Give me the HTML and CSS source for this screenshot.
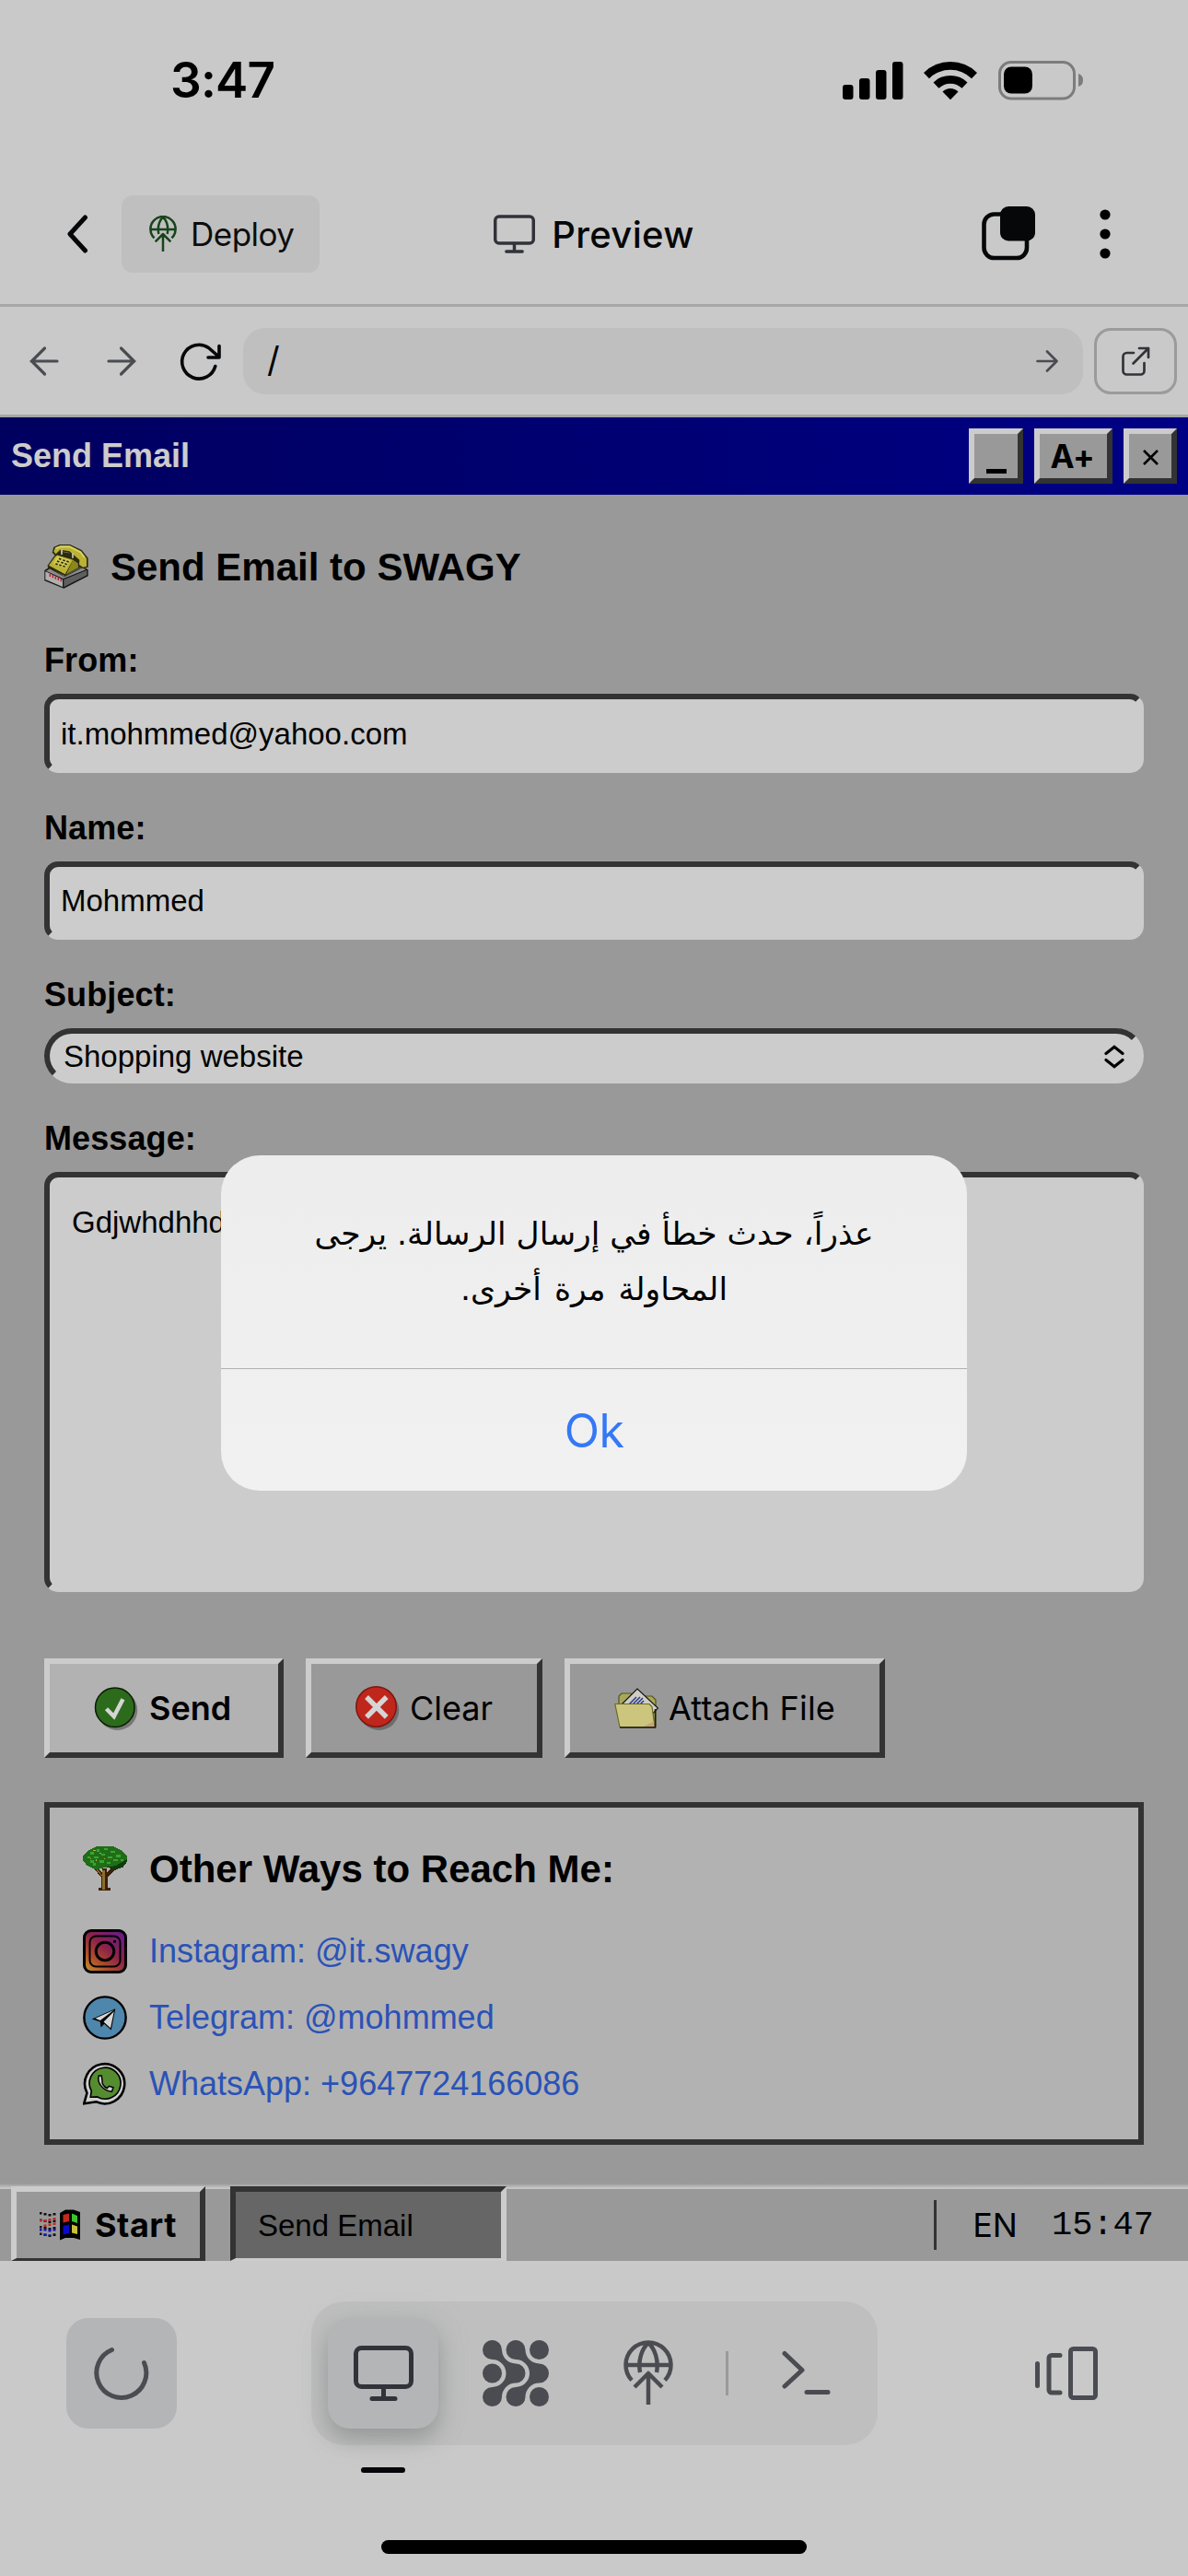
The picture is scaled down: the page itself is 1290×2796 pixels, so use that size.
FILE: index.html
```html
<!DOCTYPE html>
<html lang="en">
<head>
<meta charset="utf-8">
<title>Preview</title>
<link rel="stylesheet" href="styles.css">
</head>
<body>
<div class="screen">
  <div class="status">
    <span class="clock">3:47</span>
    <svg class="status-icons" width="262" height="44" viewBox="0 0 262 44">
      <rect x="0" y="27" width="11.500" height="16" rx="3"/>
      <rect x="18" y="20" width="11.500" height="23" rx="3"/>
      <rect x="36" y="11" width="11.500" height="32" rx="3"/>
      <rect x="54" y="2" width="11.500" height="41" rx="3"/>
      <path d="M88 14a41 41 0 0 1 58 0l-6 6.200a32.500 32.500 0 0 0-46 0z"/>
      <path d="M98.500 24.500a26.300 26.300 0 0 1 37 0l-6 6.300a17.700 17.700 0 0 0-25 0z"/>
      <path d="M108.500 34.500a12 12 0 0 1 17 0l-8.500 8.700z"/>
      <rect x="170.500" y="2.500" width="81" height="39.500" rx="12.500" fill="none" stroke="#7c7c7c" stroke-width="3"/>
      <rect x="175" y="7.500" width="31" height="29" rx="8"/>
      <path d="M256 15q5 1.500 5 7t-5 7z" fill="#7c7c7c"/>
    </svg>
  </div>

  <div class="nav">
    <div class="nav-left">
      <svg width="48" height="48" viewBox="0 0 48 48" class="line w5"><path d="M32.500 6L16 24l16.500 18"/></svg>
      <div class="deploy">
        <svg width="30" height="40" viewBox="0 0 54 72" class="line green"><path d="M10 44A24.500 24.500 0 1 1 44 44M3 27H51M18.500 36C16 22 20 10 27 3C34 10 38 22 35.500 36M12 51L27 36L42 51M27 37V70"/></svg>
        <span>Deploy</span>
      </div>
    </div>
    <div class="nav-title">
      <svg width="45" height="42" viewBox="0 0 65 60" class="line dark w5"><rect x="2.500" y="2.500" width="60" height="42" rx="6"/><path d="M32.500 45V57M20 57.500H45"/></svg>
      <span>Preview</span>
    </div>
    <div class="nav-right">
      <svg width="60" height="60" viewBox="0 0 60 60"><rect x="4.500" y="8.500" width="46.500" height="47.500" rx="11" fill="none" stroke="#060708" stroke-width="4.600"/><rect x="22" y="0" width="38" height="37.500" rx="9" fill="#060708"/></svg>
      <svg width="12" height="60" viewBox="0 0 12 60"><circle cx="6" cy="9" r="5.600"/><circle cx="6" cy="30" r="5.600"/><circle cx="6" cy="51" r="5.600"/></svg>
    </div>
  </div>

  <div class="toolbar">
    <svg width="48" height="48" viewBox="0 0 48 48" class="line gray w3"><path d="M38 24H10M24.500 10L10.500 24L24.500 38"/></svg>
    <svg width="48" height="48" viewBox="0 0 48 48" class="line gray w3"><path d="M10 24H38M23.500 10L37.500 24L23.500 38"/></svg>
    <svg width="49" height="48" viewBox="0 0 49 48" class="line w3 reload"><path d="M41.800 29.500A18.400 18.400 0 1 1 34.500 9.500L46 19.500M46 7.500V20H34"/></svg>
    <div class="url"><span>/</span><svg width="24" height="26" viewBox="0 0 24 26" class="line gray w25"><path d="M1.500 13H22M12 2.500L22.500 13L12 23.500"/></svg></div>
    <div class="external"><svg width="32" height="32" viewBox="0 0 32 32" class="line dark w25"><path d="M14 7H6.500a4 4 0 0 0-4 4V26.500a4 4 0 0 0 4 4H21.500a4 4 0 0 0 4-4V18M13.500 18.500L30 2M20 2H30V12"/></svg></div>
  </div>

  <div class="titlebar">
    <span class="titlebar-text">Send Email</span>
    <div class="winbtn min"><i></i></div>
    <div class="winbtn zoom">A+</div>
    <div class="winbtn close"><svg width="17" height="17" viewBox="0 0 17 17"><path d="M1 1L16 16M16 1L1 16" stroke="#000" stroke-width="2.600"/></svg></div>
  </div>

  <main class="content">
    <h1>
      <svg width="48" height="48" viewBox="24 24 144 144">
        <path d="M25 108L40 98L90 128L150 96L167 106V127L88 167L25 142z" fill="#161616"/>
        <path d="M28 112L84 138V162L28 138z" fill="#b0b0b0"/>
        <path d="M88 138L163 108V124L88 162z" fill="#5f5f5f"/>
        <path d="M30 110L42 103L90 130L148 100L160 106L86 135z" fill="#8b8b8b"/>
        <path d="M43 120v9M52 123v10M61 127v10M70 131v10M79 135v10" stroke="#c4202c" stroke-width="4.500"/>
        <path d="M35 92L56 62L72 46L135 58L146 96L92 127L36 100z" fill="#2c2b0c"/>
        <path d="M39 92L64 58L118 74L92 121z" fill="#b9b235"/>
        <path d="M118 74L138 88L134 100L95 122z" fill="#8c861f"/>
        <path d="M66 62L110 74L92 102L54 86z" fill="#d2cb58"/>
        <path d="M72 70l7 3M85 74l7 3M97 78l7 3M66 78l7 3M79 82l7 3M91 86l7 3M61 86l7 3M73 90l7 3M85 94l7 3" stroke="#27270c" stroke-width="5"/>
        <path d="M50 50L55 32L74 24H108L146 42L167 68V98L150 102L134 92L135 76L104 50L78 46L62 62z" fill="#2c2b0c"/>
        <path d="M55 47L60 34L76 28H108L144 46L162 70V95L150 98L138 89L139 74L106 46L76 41L62 55z" fill="#b9b235"/>
        <path d="M62 37L77 31H106L142 49L155 66" fill="none" stroke="#ddd76d" stroke-width="5"/>
        <path d="M81 57V40M117 68V52" stroke="#c8c8bb" stroke-width="5"/>
      </svg>
      <span>Send Email to SWAGY</span>
    </h1>

    <label>From:</label>
    <div class="field">it.mohmmed@yahoo.com</div>
    <label>Name:</label>
    <div class="field">Mohmmed</div>
    <label>Subject:</label>
    <div class="field select"><span>Shopping website</span><svg width="22" height="26" viewBox="0 0 22 26"><path d="M2 9.500L11 2.200L20 9.500M2 16.500L11 23.800L20 16.500" fill="none" stroke="#000" stroke-width="3.200" stroke-linecap="round"/></svg></div>
    <label>Message:</label>
    <div class="field area">Gdjwhdhhdhd</div>

    <div class="actions">
      <div class="btn send">
        <svg width="48" height="48" viewBox="0 0 32 32"><circle cx="17" cy="17.500" r="14.500" fill="#777"/><circle cx="15.200" cy="15.500" r="14.200" fill="#2c6b1b" stroke="#0b1d06" stroke-width="1"/><path d="M9 16.500L14.500 22L21 9.500" fill="none" stroke="#d5d5d5" stroke-width="3"/></svg>
        Send
      </div>
      <div class="btn clear">
        <svg width="48" height="48" viewBox="0 0 32 32"><circle cx="17" cy="17.500" r="14.500" fill="#6d6d6d"/><circle cx="15" cy="15" r="14.500" fill="#bf261c" stroke="#7d1712" stroke-width="1"/><path d="M8 8L22.500 22.500M22.500 8L8 22.500" stroke="#d5d5d5" stroke-width="3.600"/></svg>
        Clear
      </div>
      <div class="btn attach">
        <svg width="48" height="44" viewBox="0 0 48 44">
          <path d="M5 17V9l3-3h10l3 3h20l4 4v29H8z" fill="#a9a75a" stroke="#55541e" stroke-width="1.200"/>
          <path d="M6 20L25 1L47.500 22L35 35z" fill="#cfcdc4" stroke="#111" stroke-width="1.200"/>
          <path d="M16 18l8-8M20 18l8-8M24 18l7-7M28 18l4-4" stroke="#27398a" stroke-width="1.500"/>
          <path d="M.8 17.500H38l3 3l3 22H6z" fill="#cbc57d" stroke="#6c6a26" stroke-width="1.200"/>
          <path d="M43.500 36L32 42H43.500z" fill="#c7a477"/><path d="M6 43H44.500V23" fill="none" stroke="#1c1c08" stroke-width="1.500"/>
        </svg>
        Attach File
      </div>
    </div>

    <section class="panel">
      <h2>
        <svg width="48" height="48" viewBox="0 0 32 32" class="pixel">
          <path d="M7 15l6 7V30H11v2H20V30H18V22L26 15L23 14L17 19V16H14V19L9 14z" fill="#3b200c"/>
          <path d="M14 17h2V31h-2zM10 16l4 5h-1l-4-5z" fill="#8a6e2c"/>
          <path d="M10 0H22L28 3L32 7V11L29 15L23 17L17 15L9 17L3 14L0 10V7L4 3z" fill="#1f6d18"/>
          <path d="M32 9v2L29 15L23 17L17 15L24 14L29 11z" fill="#103c0c"/>
          <path d="M5 5h3M10 3h2M15 2h3M20 4h3M3 8h2M8 8h3M13 6h3M18 8h3M24 7h3M5 11h3M12 11h3M17 12h3M22 10h3M7 13h2M27 10h2" stroke="#3aa431" stroke-width="1.500"/>
          <path d="M7 3h2M12 5h1M5 9h1M9 10h1M15 9h1" stroke="#b5b52c" stroke-width="1.300"/>
        </svg>
        <span>Other Ways to Reach Me:</span>
      </h2>
      <a>
        <svg width="48" height="48" viewBox="0 0 32 32">
          <defs><linearGradient id="ig" x1="0" y1="1" x2=".8" y2="0"><stop offset="0" stop-color="#c99b2c"/><stop offset=".3" stop-color="#b0502a"/><stop offset=".6" stop-color="#8c2349"/><stop offset="1" stop-color="#681c83"/></linearGradient></defs>
          <rect x="1" y="1" width="30" height="30" rx="5" fill="url(#ig)" stroke="#000" stroke-width="2"/>
          <rect x="5" y="5" width="22" height="22" rx="4.500" fill="none" stroke="#000" stroke-width="1.300"/>
          <circle cx="16" cy="16" r="6.500" fill="none" stroke="#000" stroke-width="2"/><rect x="22" y="8" width="2" height="1.800"/>
        </svg>
        Instagram: @it.swagy
      </a>
      <a>
        <svg width="48" height="48" viewBox="0 0 32 32">
          <circle cx="16" cy="16" r="15.100" fill="#4e86ac" stroke="#000" stroke-width="1.600"/>
          <path d="M6.500 17L23.500 9.500L20.500 25L15.500 20.500L13 23L12.500 19z" fill="#000"/>
          <path d="M9 16.500L22.500 10.500L12.500 18zM15 19L22.500 11.500L20 23.500z" fill="#d6d6d6"/>
        </svg>
        Telegram: @mohmmed
      </a>
      <a>
        <svg width="48" height="48" viewBox="0 0 32 32">
          <path d="M.8 30.200L3 22.500A14.400 14.400 0 1 1 9.500 28.800z" fill="#cfcfcf" stroke="#000" stroke-width="1.700"/>
          <path d="M5.500 25.500L6.200 21A11.300 11.300 0 1 1 10.500 25.300z" fill="#558c30" stroke="#000" stroke-width="1.100"/>
          <path d="M11.500 10C10 15 14.500 21 21 21.500L22 18.500L19 17.500L17.500 19C15 17.800 13.800 15.500 14 13.500L13.500 10z" fill="#cfcfcf" stroke="#000" stroke-width="1"/>
        </svg>
        WhatsApp: +9647724166086
      </a>
    </section>
  </main>

  <footer class="taskbar">
    <div class="start">
      <svg width="45" height="36" viewBox="0 0 45 36">
        <path d="M1 4v30M6 5v30M11 6v30M16 5v29" stroke="#111" stroke-width="3" stroke-dasharray="2.500 5"/>
        <path d="M1 12v4M6 12v8M11 11v8M16 10v8" stroke="#c2281f" stroke-width="3" stroke-dasharray="2.500 3"/>
        <path d="M1 22v6M6 22v8M11 23v7M16 22v6" stroke="#1414cc" stroke-width="3" stroke-dasharray="2.500 3"/>
        <path d="M22 5L28 1.500H37L44 4V34L37 32H28L22 34.500z" fill="#000"/>
        <path d="M25.500 7L32 5.500V14L25.500 15.500z" fill="#c2281f"/><path d="M35 5.500L41 8V16L35 14z" fill="#39c52d"/>
        <path d="M25.500 19L32 17.500V27L25.500 28.500z" fill="#0a0acb"/><path d="M35 17.500L41 19.500V28L35 26.500z" fill="#c6c235"/>
      </svg>
      Start
    </div>
    <div class="task">Send Email</div>
    <div class="tray"><span>EN</span><span class="tray-clock">15:47</span></div>
  </footer>

  <div class="dock">
    <div class="tile"><svg width="60" height="60" viewBox="0 0 60 60" class="line gray w5"><path d="M19.500 4.500A27 27 0 1 0 54.500 18.500"/></svg></div>
    <div class="dock-group">
      <div class="tile active"><svg width="65" height="60" viewBox="0 0 65 60" class="line dark w5"><rect x="2.500" y="2.500" width="60" height="42" rx="6"/><path d="M32.500 45V57M20 57.500H45"/></svg></div>
      <svg width="72" height="72" viewBox="0 0 72 72" fill="#4b4c52"><path d="M10.500 0A10.500 10.500 0 0 1 21 10.500A15 15 0 0 0 36 25.500A10.500 10.500 0 0 1 36 46.500A15 15 0 0 0 21 61.500A10.500 10.500 0 1 1 10.500 51A15 15 0 0 0 10.500 21A10.500 10.500 0 0 1 10.500 0Z"/><path transform="translate(25.500)" d="M10.500 0A10.500 10.500 0 0 1 21 10.500A15 15 0 0 0 36 25.500A10.500 10.500 0 0 1 36 46.500A15 15 0 0 0 21 61.500A10.500 10.500 0 1 1 10.500 51A15 15 0 0 0 10.500 21A10.500 10.500 0 0 1 10.500 0Z"/><circle cx="10.500" cy="36" r="10.500"/><circle cx="61.500" cy="10.500" r="10.500"/><circle cx="61.500" cy="61.500" r="10.500"/></svg>
      <svg width="54" height="72" viewBox="0 0 54 72" class="line gray globe"><path d="M9 43.500A24.500 24.500 0 1 1 45 43.500M3 27H51M18 35C15.500 22 20 9 27 3C34 9 38.500 22 36 35M12 51L27 36L42 51M27 37V70"/></svg>
      <i class="sep"></i>
      <svg width="54" height="50" viewBox="0 0 54 50" class="line gray w5"><path d="M3 3.500L22 21.500L3 39M27 45.500H50"/></svg>
    </div>
    <svg width="68" height="60" viewBox="0 0 68 60" class="line gray w5"><path d="M2.500 19.500V43.500M27 10.500H18a3 3 0 0 0-3 3V48a3 3 0 0 0 3 3H27"/><rect x="38.500" y="3.500" width="27" height="53" rx="3"/></svg>
  </div>
  <div class="underline"></div>
  <div class="home"></div>

  <div class="dialog">
    <div class="dialog-text" dir="rtl" lang="ar"><div>عذراً، حدث خطأ في إرسال الرسالة. يرجى</div><div class="last">المحاولة مرة أخرى.</div></div>
    <div class="dialog-ok">Ok</div>
  </div>
</div>
</body>
</html>
```

FILE: styles.css
```css
* { box-sizing: border-box; }
html, body { margin: 0; }
body { background: #c9c9c9; color: #000; font-family: Inter, sans-serif; }
svg { display: block; flex: none; }
.screen { position: relative; display: flex; flex-direction: column; width: 1290px; height: 2796px; overflow: hidden; white-space: nowrap; }

.line { fill: none; stroke: #060708; stroke-width: 4.5; stroke-linecap: round; stroke-linejoin: round; }
.line.w5 { stroke-width: 5; }
.line.w3 { stroke-width: 3.2; }
.line.w25 { stroke-width: 2.7; }
.line.gray { stroke: #4b4c52; }
.line.dark { stroke: #32333a; }
.line.green { stroke: #17451b; stroke-linecap: butt; }
.globe { stroke-linecap: butt; }
.pixel { shape-rendering: crispEdges; }

.status { display: flex; align-items: center; justify-content: space-between; height: 177px; padding: 0 113px 4px 185px; }
.clock { font-size: 53px; font-weight: 600; letter-spacing: -.8px; }

.nav { display: grid; grid-template-columns: 1fr auto 1fr; align-items: center; height: 156px; padding: 1px 84px 0 60px; border-bottom: 3px solid #a7a7a7; }
.nav-left { display: flex; align-items: center; gap: 24px; }
.deploy { display: flex; align-items: center; gap: 15px; width: 215px; height: 84px; padding-left: 30px; border-radius: 12px; background: #bfbfbf; font-size: 35px; letter-spacing: -.5px; color: #0c0d0e; }
.nav-title { display: flex; align-items: center; gap: 18px; margin-left: 24px; font-size: 40px; font-weight: 500; letter-spacing: .3px; color: #060708; }
.nav-right { display: flex; align-items: center; justify-content: flex-end; gap: 70px; }

.toolbar { display: flex; align-items: center; height: 120px; padding: 0 12px 0 24px; border-bottom: 3px solid #a5a6a8; }
.toolbar > svg { margin-right: 36px; }
.toolbar > .reload { margin-right: 23px; stroke-width: 3.6; }
.url { display: flex; flex: 1; align-items: center; justify-content: space-between; height: 72px; padding: 0 27px 0 26px; border-radius: 24px; background: #bfbfbf; font-size: 38px; line-height: 68px; }
.url span { padding-bottom: 3px; }
.external { display: flex; align-items: center; justify-content: center; width: 90px; height: 72px; margin-left: 12px; border: 3px solid #9a9b9b; border-radius: 18px; }

.titlebar { display: flex; align-items: center; gap: 12px; height: 84px; padding: 0 12px; background: linear-gradient(90deg, #00005f, #000085); }
.titlebar-text { flex: 1; font: bold 36px "Liberation Sans", Arial, sans-serif; color: #ccc; }
.winbtn { display: flex; align-items: center; justify-content: center; height: 60px; border: 6px solid; border-color: #ccc #333 #333 #ccc; background: #999; font-size: 35px; font-weight: 700; }
.min { width: 59px; }
.min i { width: 22px; height: 5px; margin-top: 32px; background: #000; }
.zoom { width: 85px; letter-spacing: -.3px; padding-right: 2px; }
.close { width: 58px; padding-top: 2px; }

.content { height: 1833px; padding: 54px 48px 0; background: #999; font-family: "Liberation Sans", Arial, sans-serif; }
h1, h2 { display: flex; align-items: center; gap: 24px; height: 48px; margin: 0; font-size: 42px; line-height: 48px; }
h1 span, h2 span { padding-top: 2px; }
h1 { margin-bottom: 54px; }
h2 { margin-bottom: 42px; }
label { display: block; height: 48px; margin-bottom: 12px; font-size: 36px; font-weight: bold; line-height: 48px; letter-spacing: .1px; }
.field { display: flex; align-items: center; height: 85.5px; margin-bottom: 36px; padding: 2px 12px 0; border: 6px solid; border-color: #333 #ccc #ccc #333; border-radius: 15px; background: #ccc; font-size: 33px; }
.select { justify-content: space-between; height: 60px; padding: 1px 15px 0; border-radius: 30px; }
.area { display: block; height: 456px; margin-bottom: 72px; padding: 24px; line-height: 49px; }

.actions { display: flex; gap: 24px; margin-bottom: 48px; font-family: Inter, sans-serif; font-size: 36px; }
.btn { display: flex; align-items: center; height: 108px; padding-left: 48px; gap: 11px; border: 6px solid; border-color: #ccc #333 #333 #ccc; background: #999; }
.send { width: 260px; background: #b2b2b2; font-weight: 600; gap: 12px; }
.clear { width: 257px; }
.attach { width: 348px; letter-spacing: .2px; }

.panel { height: 372px; padding: 42px 36px; border: 6px solid #333; background: #b2b2b2; }
.panel a { display: flex; align-items: center; gap: 24px; height: 48px; margin-bottom: 24px; font-size: 36px; color: #2a52b7; }

.taskbar { display: flex; align-items: flex-end; height: 84px; background: linear-gradient(#999, #c6c6c6 5px, #c6c6c6 6px, #999 6px); }
.start { display: flex; align-items: center; gap: 15px; width: 211px; height: 81px; margin-left: 12px; padding-left: 25px; border: 6px solid; border-width: 6px 6px 3px; border-color: #ccc #333 #333 #ccc; background: #999; font-size: 36px; font-weight: 700; letter-spacing: .5px; }
.task { width: 300px; height: 81px; margin-left: 27px; padding-left: 24px; border: 6px solid; border-width: 6px 6px 3px; border-color: #333 #ccc #ccc #333; background: #666; font: 33px/73px "Liberation Sans", Arial, sans-serif; }
.tray { display: flex; align-items: center; gap: 37px; height: 54px; margin: 0 37px 12px auto; padding-left: 39px; border-left: 3px solid #333; font-size: 36px; }
.tray-clock { font-family: "Liberation Mono", monospace; font-size: 37px; }

.dock { display: flex; align-items: center; height: 156px; margin-top: 44px; padding: 0 98px 0 72px; }
.tile { display: flex; align-items: center; justify-content: center; width: 120px; height: 120px; border-radius: 24px; background: #b4b5b7; }
.tile.active { box-shadow: 0 12px 24px rgba(120, 124, 122, .55), 0 0 30px rgba(175, 182, 182, .4); }
.dock-group { display: flex; align-items: center; width: 615px; height: 156px; margin: 0 auto 0 146px; padding-left: 18px; border-radius: 36px; background: #bfbfbf; }
.dock-group > svg { margin-left: 48px; }
.dock-group > .globe { margin-left: 81px; }
.sep { width: 3px; height: 48px; margin-left: 57px; background: #999a9b; }
.dock-group > .sep + svg { margin-left: 58px; }
.underline { width: 48px; height: 6px; margin: 24px 0 0 392px; border-radius: 3px; background: #04060a; }
.home { width: 462px; height: 15px; margin: 73px auto 0; border-radius: 8px; background: #000; }

.dialog { position: absolute; top: 1254px; left: 240px; width: 810px; height: 364px; border-radius: 42px; background: linear-gradient(#ededed, #f1f1f1); overflow: hidden; }
.dialog-text { height: 232px; padding-top: 55px; border-bottom: 1px solid #b0b0b0; font: 34.5px/60px "DejaVu Sans", sans-serif; text-align: center; }
.dialog-text .last { word-spacing: 3px; }
.dialog-ok { padding-top: 1px; font-size: 50px; line-height: 132px; letter-spacing: -.5px; color: #3478f6; text-align: center; }
```
